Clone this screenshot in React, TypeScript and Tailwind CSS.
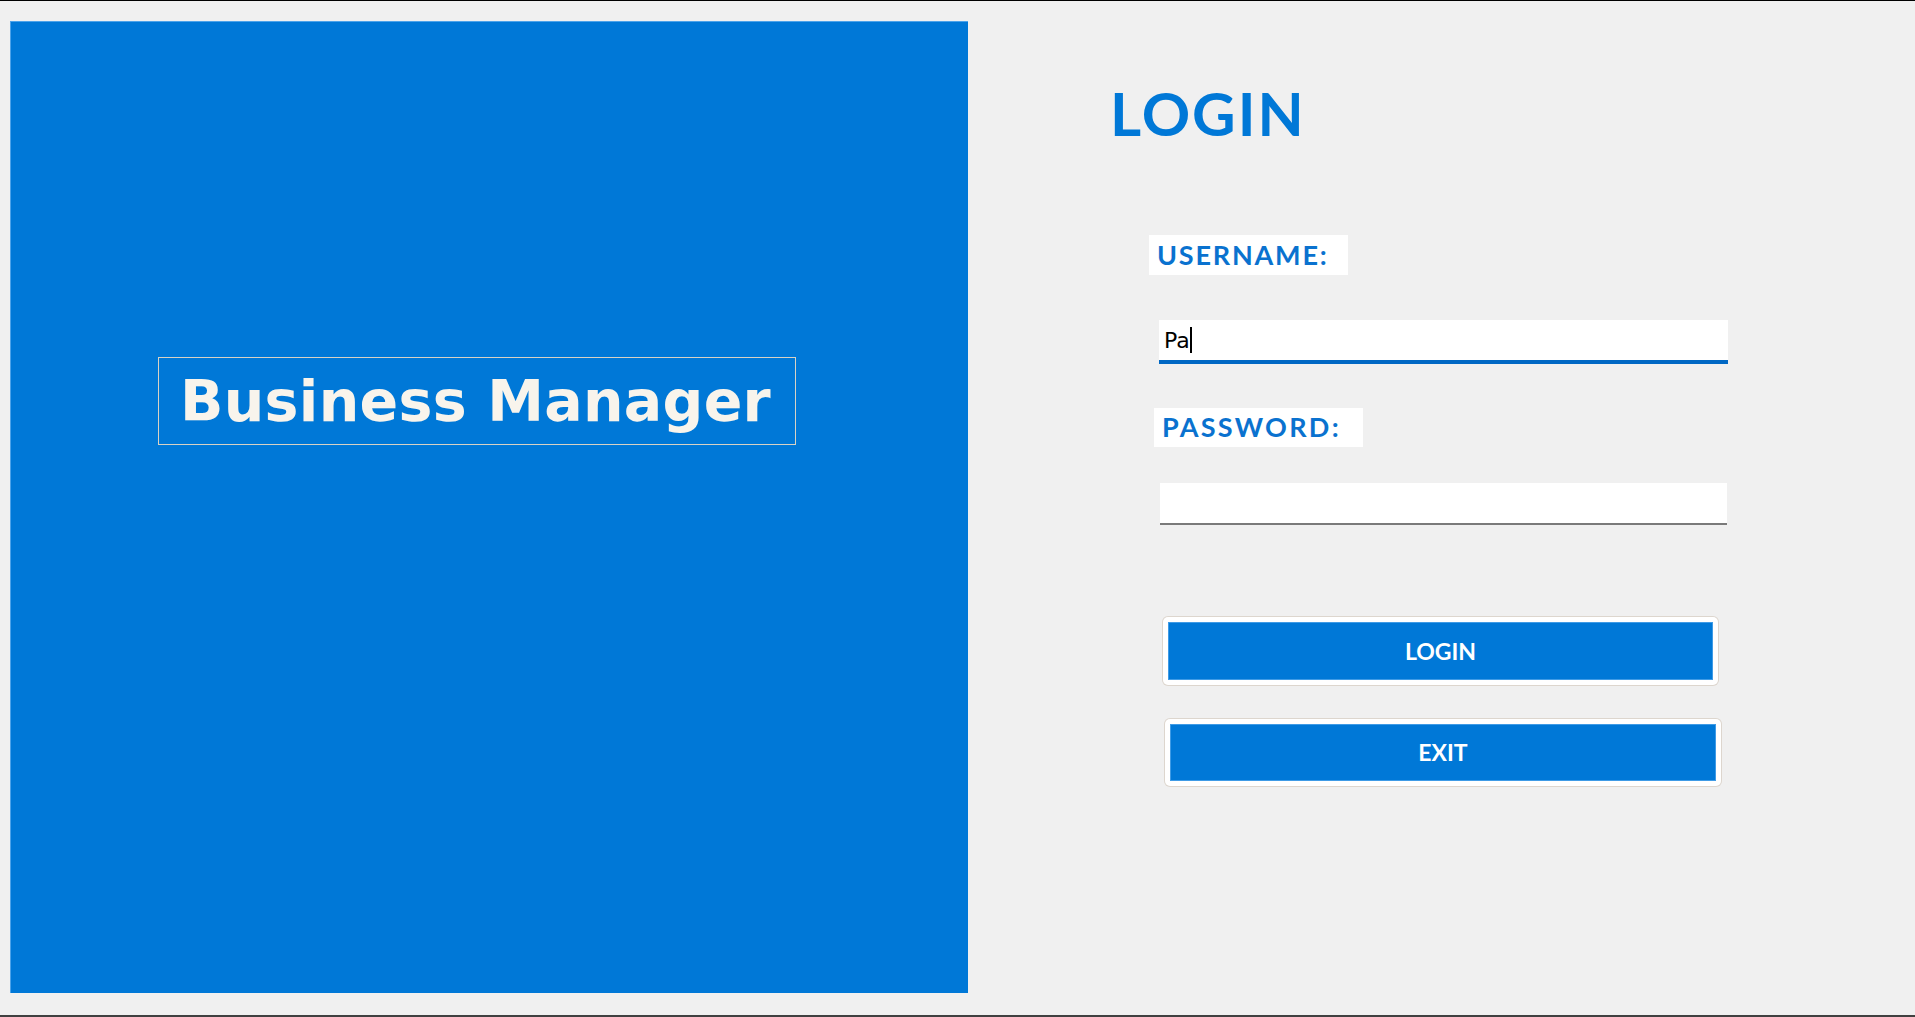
export default function App() {
  return (
    <div className="w-[1915px] h-[1017px] bg-[#f0f0f0] flex flex-col border-t border-black overflow-hidden" style={{ fontFamily: 'Lato, "Liberation Sans", sans-serif' }}>
      <div className="flex flex-1">
        {/* left brand panel */}
        <div className="ml-[10px] mt-[20px] w-[958px] h-[972px] bg-[#0078d7] border-t border-l border-[#4da3ea] pl-[147px] pt-[335px] shrink-0">
          <div className="w-[638px] h-[88px] border border-[#d9d2c4] flex items-center pl-[21px]">
            <span className="text-[#f8f4ec] font-bold text-[57px] leading-none tracking-[0.3px]" style={{ fontFamily: '"DejaVu Sans", sans-serif' }}>
              Business Manager
            </span>
          </div>
        </div>

        {/* login form */}
        <div className="flex flex-col items-start">
          <h1 className="mt-[82px] ml-[142px] h-[60px] leading-[60px] text-[60px] font-bold text-[#0078d7] tracking-[2px]">LOGIN</h1>

          <div className="mt-[92px] ml-[181px] w-[199px] h-[40px] bg-white flex items-center pl-[8px]">
            <span className="text-[27px] font-bold text-[#0a72cf] tracking-[1.8px]">USERNAME:</span>
          </div>

          <div className="mt-[45px] ml-[191px] w-[569px] h-[44px] bg-white border-b-4 border-[#0068c4] flex items-center pl-[5px]">
            <span className="text-[22px] text-black" style={{ fontFamily: '"DejaVu Sans", sans-serif' }}>Pa</span>
            <span className="w-[2px] h-[26px] bg-black"></span>
          </div>

          <div className="mt-[44px] ml-[186px] w-[209px] h-[39px] bg-white flex items-center pl-[8px]">
            <span className="text-[27px] font-bold text-[#0a72cf] tracking-[2.3px]">PASSWORD:</span>
          </div>

          <div className="mt-[36px] ml-[192px] w-[567px] h-[42px] bg-white border-b-2 border-[#7a7a7a]"></div>

          <button className="mt-[92px] ml-[195px] w-[555px] h-[68px] bg-white rounded-[5px] p-[5px] shadow-[0_0_0_1px_#ddd6ce]">
            <div className="w-full h-full bg-[#0078d7] border border-[#3f9be6] flex items-center justify-center">
              <span className="text-white font-bold text-[23px]">LOGIN</span>
            </div>
          </button>

          <button className="mt-[34px] ml-[197px] w-[556px] h-[67px] bg-white rounded-[5px] p-[5px] shadow-[0_0_0_1px_#ddd6ce]">
            <div className="w-full h-full bg-[#0078d7] border border-[#3f9be6] flex items-center justify-center">
              <span className="text-white font-bold text-[23px]">EXIT</span>
            </div>
          </button>
        </div>
      </div>
      <div className="h-[2px] bg-[#404040] shrink-0"></div>
    </div>
  );
}
